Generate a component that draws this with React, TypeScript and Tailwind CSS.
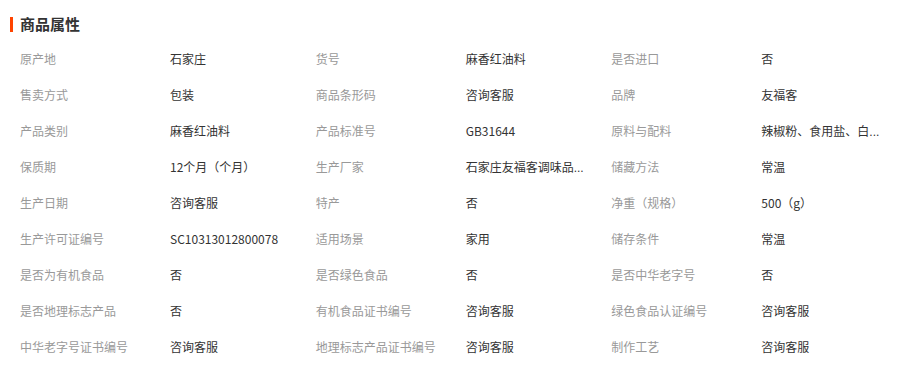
import React from "react";

type Cell = [string, string, boolean?];

const rows: Cell[][] = [
  [["原产地", "石家庄"], ["货号", "麻香红油料"], ["是否进口", "否"]],
  [["售卖方式", "包装"], ["商品条形码", "咨询客服"], ["品牌", "友福客"]],
  [["产品类别", "麻香红油料"], ["产品标准号", "GB31644"], ["原料与配料", "辣椒粉、食用盐、白", true]],
  [["保质期", "12个月（个月）"], ["生产厂家", "石家庄友福客调味品", true], ["储藏方法", "常温"]],
  [["生产日期", "咨询客服"], ["特产", "否"], ["净重（规格）", "500（g）"]],
  [["生产许可证编号", "SC10313012800078"], ["适用场景", "家用"], ["储存条件", "常温"]],
  [["是否为有机食品", "否"], ["是否绿色食品", "否"], ["是否中华老字号", "否"]],
  [["是否地理标志产品", "否"], ["有机食品证书编号", "咨询客服"], ["绿色食品认证编号", "咨询客服"]],
  [["中华老字号证书编号", "咨询客服"], ["地理标志产品证书编号", "咨询客服"], ["制作工艺", "咨询客服"]],
];

export default function App() {
  return (
    <div
      className="w-[917px] h-[370px] bg-white overflow-hidden"
      style={{ fontFamily: '"Noto Sans CJK SC", "Microsoft YaHei", sans-serif' }}
    >
      <div className="flex items-center pt-[14px] pl-[10px] h-[34px]">
        <div className="w-[3px] h-[15px] bg-[#ff4400]" />
        <div className="ml-[7px] text-[15px] leading-[20px] font-bold text-[#333]">商品属性</div>
      </div>
      <div className="mt-[7px] pl-[20px] pr-[10px]">
        {rows.map((row, i) => (
          <div key={i} className="grid grid-cols-3 h-[36px] items-center text-[12px] leading-[16px]">
            {row.map(([k, v, cut], j) => (
              <div key={j} className="flex items-center">
                <div className="w-[150px] shrink-0 text-[#999] whitespace-nowrap">{k}</div>
                <div className="whitespace-nowrap text-[#333]">
                  {v}
                  {cut && (
                    <span className="text-[#333]" style={{ fontFamily: '"Liberation Sans", sans-serif' }}>
                      ...
                    </span>
                  )}
                </div>
              </div>
            ))}
          </div>
        ))}
      </div>
    </div>
  );
}
